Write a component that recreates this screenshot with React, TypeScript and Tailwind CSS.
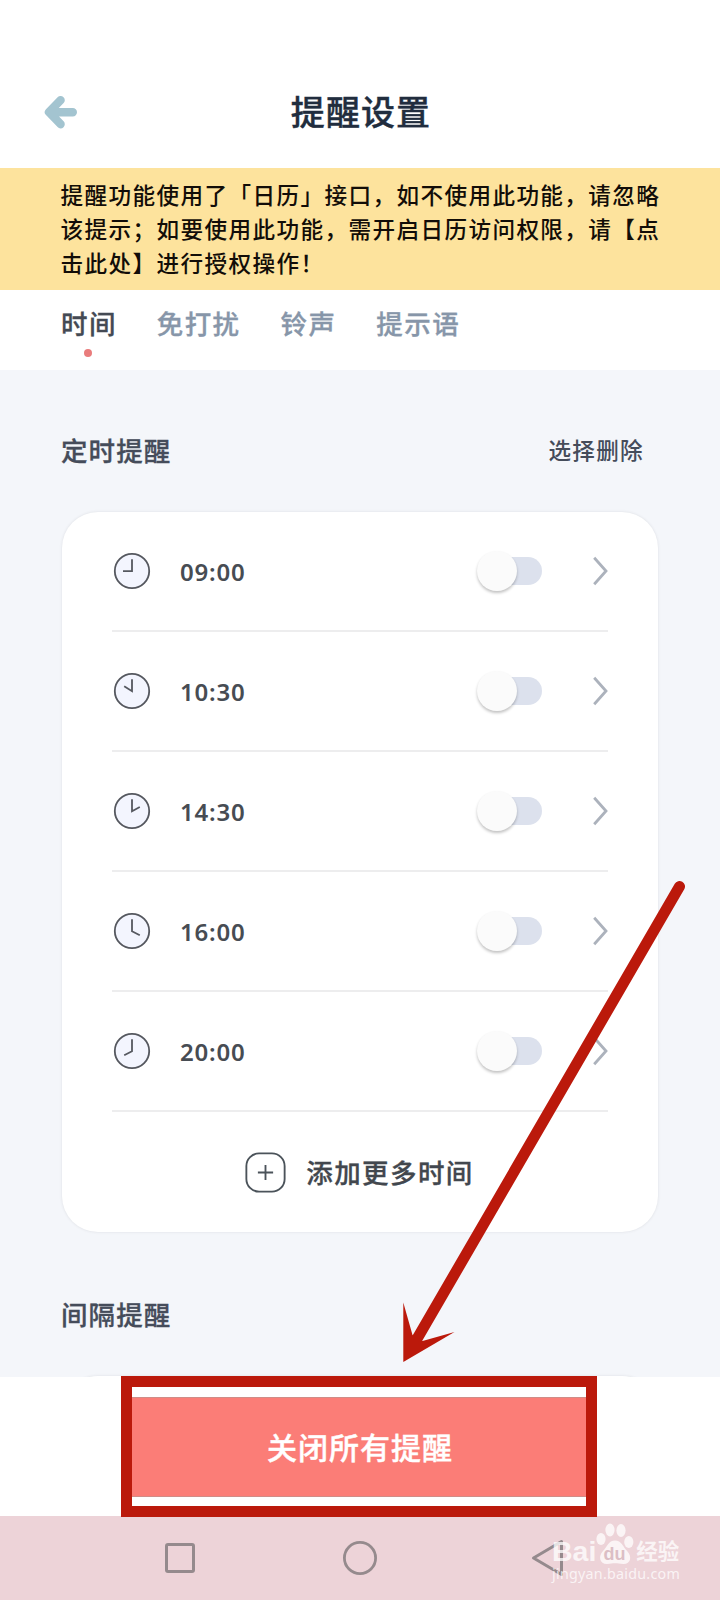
import React, { useState } from 'react';

interface Reminder {
    time: string;
    // end point of the hour hand inside the 38x38 clock face
    hand: string;
}

const TABS = ['时间', '免打扰', '铃声', '提示语'];

const REMINDERS: Reminder[] = [
    { time: '09:00', hand: '10 19.2' },
    { time: '10:30', hand: '11.2 14.2' },
    { time: '14:30', hand: '26.8 15' },
    { time: '16:00', hand: '26.8 23.2' },
    { time: '20:00', hand: '11.2 23.2' },
];

const ClockIcon = ({ hand }: { hand: string }) => (
    <svg className="size-[38px] shrink-0" viewBox="0 0 38 38" fill="none" stroke="#55585f">
        <circle cx="19" cy="19" r="17.2" fill="#f3f5fe" strokeWidth="1.8" />
        <path d={`M19 7.2 V19.2 L${hand}`} strokeWidth="1.8" />
    </svg>
);

const Toggle = ({ on, onClick }: { on: boolean; onClick: () => void }) => (
    <button onClick={onClick} className={`flex h-7 w-[60px] shrink-0 items-center rounded-full ${on ? 'justify-end bg-[#fb7d77]' : 'bg-[#dce1ed]'}`}>
        <span className="-ml-[5px] size-10 shrink-0 rounded-full bg-[#fbfbfb] shadow-[0_2px_3px_rgba(0,0,0,0.24)]" />
    </button>
);

const ReminderRow = ({ reminder }: { reminder: Reminder }) => {
    const [on, setOn] = useState(false);
    return (
        <div className="flex h-[120px] items-center border-b-2 border-[#ededee]">
            <div className="ml-px"><ClockIcon hand={reminder.hand} /></div>
            <span className="ml-[29px] flex-1 pt-0.5 text-[24px] font-semibold tracking-[0.8px] text-[#474c53]">{reminder.time}</span>
            <Toggle on={on} onClick={() => setOn(!on)} />
            <svg className="ml-[50px] h-[30px] w-4 shrink-0" viewBox="0 0 16 30" fill="none" stroke="#acb2bc" strokeWidth="2.8">
                <path d="M2.2 1.8 L14 15 L2.2 28.2" />
            </svg>
        </div>
    );
};

const Watermark = () => (
    <div className="absolute top-[1518px] left-[552px] w-[132px] text-white/75">
        <div className="flex h-[46px] items-end">
            <span className="font-['Liberation_Sans'] text-[28.5px] leading-[26px] font-bold">Bai</span>
            <svg className="h-[42px] w-[38px]" viewBox="0 0 38 42" fill="currentColor">
                <ellipse cx="5" cy="17" rx="4.6" ry="6" />
                <ellipse cx="14" cy="8" rx="4.6" ry="6.5" />
                <ellipse cx="25" cy="8.5" rx="4.6" ry="6.5" />
                <ellipse cx="32.8" cy="20" rx="4.6" ry="6" />
                <path d="M19 18.5 C12.5 18.5 11 25 7 29 C2 34 3.5 42 11 42 C15 42 16 41.3 19 41.3 C22 41.3 23.5 42 27.5 42 C35 42 36 34.5 31.5 29.5 C27 25 25.5 18.5 19 18.5 Z" />
                <text x="18.5" y="38" textAnchor="middle" fontFamily="Liberation Sans" fontSize="18" fontWeight="bold" fill="#dcbec5">du</text>
            </svg>
            <span className="ml-0.5 text-[21.5px] leading-[27px] font-bold">经验</span>
        </div>
        <div className="mt-0.5 text-[14.3px] leading-[16px] tracking-[0.25px] whitespace-nowrap">jingyan.baidu.com</div>
    </div>
);

const App: React.FC = () => {
    const [activeTab, setActiveTab] = useState(TABS[0]);

    return (
        <div className="relative flex h-[1600px] w-[720px] flex-col overflow-hidden bg-white font-['Noto_Sans','Noto_Sans_CJK_SC',sans-serif]">
            {/* Header */}
            <header className="grid h-[168px] grid-cols-[120px_1fr_120px] items-end pb-[30px]">
                <svg className="mb-[9px] ml-11 h-[34px] w-[34px]" viewBox="0 0 34 34" fill="none" stroke="#a3c4d0" strokeWidth="8.4" strokeLinecap="round" strokeLinejoin="round">
                    <path d="M16.6 5.2 L5 17.2 L16.6 29.2 M6 17.2 H28.8" />
                </svg>
                <h1 className="ml-0.5 text-center text-[34px] leading-[52px] font-medium tracking-[1.1px] text-[#212d3e] [-webkit-text-stroke:0.4px]">提醒设置</h1>
            </header>

            {/* Permission notice */}
            <div className="h-[122px] bg-[#fde39d] pt-[11px] pl-[60.5px] text-[22.6px] leading-[34px] font-medium tracking-[1.4px] whitespace-nowrap text-[#120d08]">
                <p>提醒功能使用了「日历」接口，如不使用此功能，请忽略</p>
                <p>该提示；如要使用此功能，需开启日历访问权限，请【点</p>
                <p>击此处】进行授权操作！</p>
            </div>

            {/* Tabs */}
            <nav className="flex h-20 gap-[40px] pt-[14px] pl-[61px]">
                {TABS.map(tab => (
                    <button
                        key={tab}
                        onClick={() => setActiveTab(tab)}
                        className={`flex flex-col items-center text-[26.5px] leading-[40px] font-medium tracking-[1.4px] [-webkit-text-stroke:0.3px] ${tab === activeTab ? 'text-[#444a54]' : 'text-[#8796a9]'}`}
                    >
                        {tab}
                        {tab === activeTab && <span className="mt-[5px] mr-px size-2 rounded-full bg-[#e97c7c]" />}
                    </button>
                ))}
            </nav>

            {/* Reminder list */}
            <main className="h-[1007px] overflow-hidden bg-[#f4f6fa] pr-[62px] pl-[62px]">
                <div className="flex h-[142px] items-center justify-between pt-[20px] text-[#454c5a]">
                    <h2 className="-ml-px pt-0.5 text-[26.5px] font-medium tracking-[1.1px] [-webkit-text-stroke:0.3px]">定时提醒</h2>
                    <button className="mr-[14px] text-[22.6px] font-medium tracking-[1.3px]">选择删除</button>
                </div>

                <section className="h-[720px] rounded-[36px] bg-white px-[50px] shadow-[0_0_3px_rgba(60,60,70,0.13)]">
                    {REMINDERS.map(r => <ReminderRow key={r.time} reminder={r} />)}
                    <button className="flex h-[120px] w-full items-center justify-center gap-5 pr-px text-[26.5px] font-medium tracking-[1.4px] text-[#42474e]">
                        <svg className="size-[41px]" viewBox="0 0 42 42" fill="none" stroke="#4b535a" strokeWidth="1.9">
                            <rect x="1.4" y="1.4" width="39.2" height="39.2" rx="13" />
                            <path d="M21 13.2 V28.8 M13.2 21 H28.8" />
                        </svg>
                        <span className="pt-[3px] [-webkit-text-stroke:0.3px]">添加更多时间</span>
                    </button>
                </section>

                <h2 className="-ml-px pt-[63px] text-[26.5px] leading-[40px] font-medium tracking-[1.1px] text-[#454c5a] [-webkit-text-stroke:0.3px]">间隔提醒</h2>
                <section className="mt-[41px] h-20 rounded-[36px] bg-white shadow-[0_0_3px_rgba(60,60,70,0.13)]" />
            </main>

            {/* Bottom action */}
            <div className="h-[139px] px-[132px] pt-5">
                <button className="h-[100px] w-full border-t border-b border-[#d08c87] bg-[#fb7d77] text-[30px] font-medium tracking-[1px] text-white [-webkit-text-stroke:0.4px]">
                    关闭所有提醒
                </button>
            </div>

            {/* System navigation */}
            <footer className="flex h-[84px] items-center justify-between bg-[#edd3d8] px-[157px]">
                <svg className="size-[46px]" viewBox="0 0 46 46" fill="none" stroke="#958a8d" strokeWidth="3">
                    <rect x="9.5" y="9.5" width="27" height="27" rx="1.5" />
                </svg>
                <svg className="size-[46px]" viewBox="0 0 46 46" fill="none" stroke="#958a8d" strokeWidth="2.8">
                    <circle cx="23" cy="23" r="15.6" />
                </svg>
                <svg className="size-[46px]" viewBox="0 0 46 46" fill="none" stroke="#958a8d" strokeWidth="3" strokeLinejoin="round" overflow="visible">
                    <path d="M16.5 23 L44.5 6.5 V39.5 Z" />
                </svg>
            </footer>

            <Watermark />

            {/* Highlight frame and arrow over the button */}
            <div className="pointer-events-none absolute top-[1376px] left-[121px] h-[141px] w-[476px] border-[11px] border-[#bb190b]" />
            <svg className="pointer-events-none absolute top-0 left-0 h-[1600px] w-[720px]" viewBox="0 0 720 1600">
                <path d="M679.5 886.5 L417.5 1338" stroke="#bb190b" strokeWidth="11" strokeLinecap="round" />
                <path d="M403.3 1362 V1302.5 L412.5 1335 L422.5 1341 L454.5 1332 Z" fill="#bb190b" />
            </svg>
        </div>
    );
};

export default App;
